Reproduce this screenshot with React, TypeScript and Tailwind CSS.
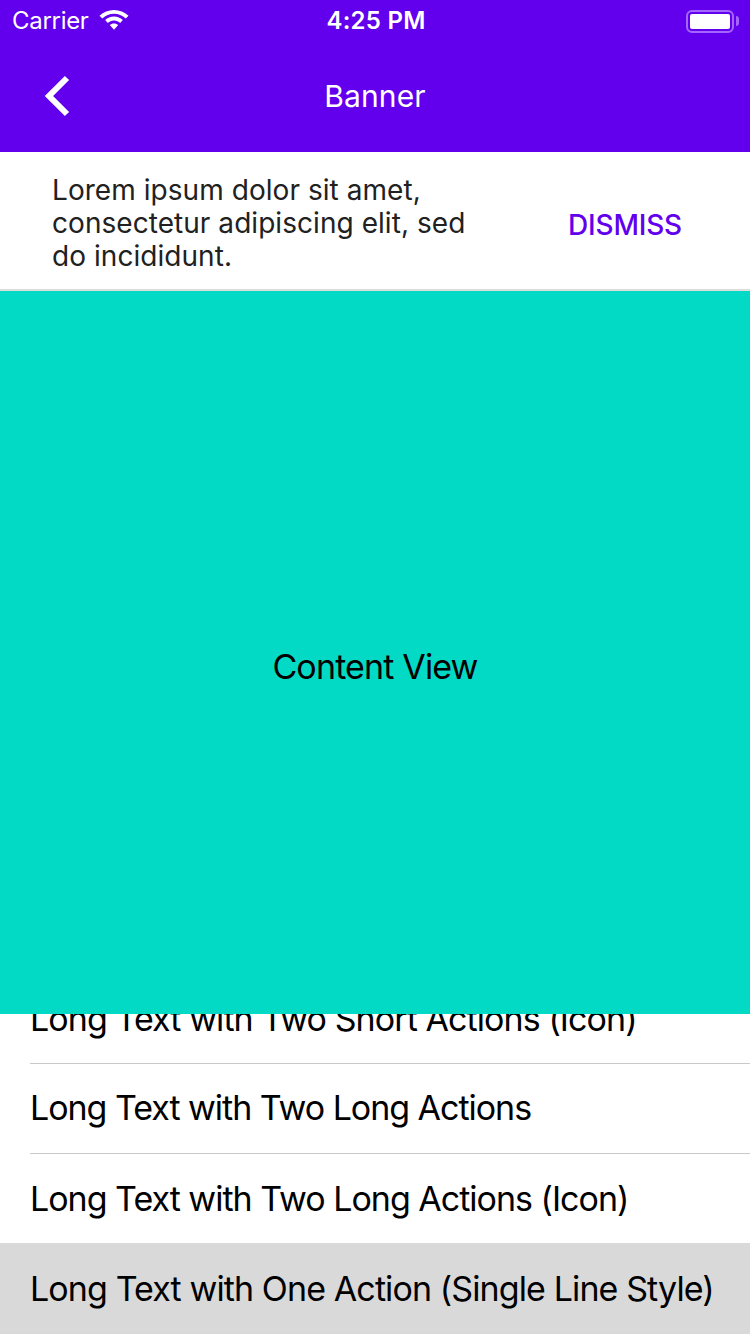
import React from "react";

const rows = [
  { label: "Long Text with Two Short Actions (Icon)", cls: "h-[90px] pb-[1px] border-b border-[#c8c8c8] tracking-[-0.92px]" },
  { label: "Long Text with Two Long Actions", cls: "h-[90px] pb-[2px] border-b border-[#c8c8c8] tracking-[-1.03px]" },
  { label: "Long Text with Two Long Actions (Icon)", cls: "h-[89px] tracking-[-1px]" },
];

export default function App() {
  return (
    <div className="flex h-[1334px] w-[750px] flex-col overflow-hidden bg-white font-['Inter',sans-serif]">
      {/* Status bar + nav */}
      <div className="h-[152px] shrink-0 bg-[#6200ee] text-white">
        <div className="flex h-10 items-center justify-between pl-[12px] pr-[10px] pt-[2px]">
          <div className="flex w-[200px] items-center gap-[10px]">
            <span className="text-[24px] leading-none tracking-[-0.3px]">Carrier</span>
            <svg className="-mt-[2px]" width="30" height="22" viewBox="0 0 30 22" fill="white">
              <path d="M15 1C9.300 1 4.600 3.100 .5 6.700L3.300 9.500C6.600 6.500 10.500 4.800 15 4.800s8.400 1.700 11.700 4.700l2.800-2.800C25.400 3.100 20.700 1 15 1z" />
              <path d="M15 7.600c-3.500 0-6.500 1.300-8.800 3.500l2.600 2.800c1.700-1.500 3.800-2.500 6.200-2.500s4.500 1 6.200 2.500l2.600-2.800C21.500 8.900 18.500 7.600 15 7.600z" />
              <path d="M15 14.400c-1.700 0-3.100.6-4.200 1.700L15 20.800l4.200-4.700c-1.100-1.100-2.500-1.700-4.200-1.700z" />
            </svg>
          </div>
          <span className="text-[24px] font-semibold leading-none tracking-[0.25px]">4:25 PM</span>
          <div className="flex w-[200px] items-center justify-end gap-[2px] pr-[1px]">
            <div className="h-[23px] w-[48px] rounded-[6px] border-2 border-[#a566ff] p-[2px]">
              <div className="h-full w-full rounded-[2px] bg-white" />
            </div>
            <div className="h-[10px] w-[3px] rounded-r-full bg-[#a566ff]" />
          </div>
        </div>
        <div className="relative flex h-[112px] items-center justify-center">
          <svg className="absolute left-[42px] top-[35px]" width="30" height="42" viewBox="0 0 30 42" fill="none" stroke="white" strokeWidth="6">
            <path d="M25 3 L7 21 L25 39" />
          </svg>
          <span className="text-[30px] leading-none tracking-[0.1px]">Banner</span>
        </div>
      </div>

      {/* Banner */}
      <div className="flex h-[139px] shrink-0 items-center justify-between border-b-2 border-[#dddddd] bg-white pl-[52px] pr-[68px] pt-[5px]">
        <p className="w-[440px] text-[28px] leading-[33px] tracking-[0.05px] text-[#212121]">
          Lorem ipsum dolor sit amet, consectetur adipiscing elit, sed do incididunt.
        </p>
        <span className="mt-[3px] text-[28px] font-[450] leading-none tracking-[-0.2px] text-[#6200ee]">DISMISS</span>
      </div>

      {/* Content view */}
      <div className="flex h-[723px] shrink-0 items-center justify-center bg-[#03dac5] pt-[28px] text-[34px] tracking-[-0.85px] text-black">
        Content View
      </div>

      {/* List scrolled behind */}
      <div className="flex min-h-0 flex-1 flex-col justify-end overflow-hidden text-[34px] text-black">
        {rows.map((r) => (
          <div key={r.label} className={`ml-[30px] flex shrink-0 items-center whitespace-nowrap ${r.cls}`}>
            {r.label}
          </div>
        ))}
        <div className="flex h-[91px] shrink-0 items-center whitespace-nowrap bg-[#d9d9d9] pb-[1px] pl-[30px] tracking-[-0.89px]">
          Long Text with One Action (Single Line Style)
        </div>
      </div>
    </div>
  );
}
